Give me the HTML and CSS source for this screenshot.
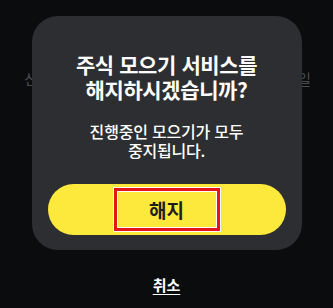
FILE: index.html
```html
<!DOCTYPE html>
<html lang="ko">
<head>
    <meta charset="UTF-8">
    <meta name="viewport" content="width=device-width, initial-scale=1.0">
    <title>주식 모으기 해지</title>
    <link rel="stylesheet" href="styles.css">
</head>
<body>
    <div class="screen">
        <!-- 뒤쪽 화면 -->
        <div class="behind-row">
            <span>신</span>
            <span>일</span>
        </div>

        <div class="overlay">
            <div class="dialog">
                <h1 class="dialog-title">주식 모으기 서비스를<br>해지하시겠습니까?</h1>
                <p class="dialog-text">진행중인 모으기가 모두<br>중지됩니다.</p>
                <button class="confirm-button"><span class="mark">해지</span></button>
            </div>
            <a class="cancel-link" href="#">취소</a>
        </div>
    </div>
</body>
</html>
```

FILE: styles.css
```css
:root {
    --bg-color: #0b0c0e;
    --dialog-color: #2c2e31;
    --yellow: #fde93b;
    --text-color: #ffffff;
}

* {
    margin: 0;
    padding: 0;
    box-sizing: border-box;
    font-family: "Noto Sans CJK KR", "Noto Sans", sans-serif;
}

body {
    background-color: var(--bg-color);
    color: var(--text-color);
    width: 333px;
    height: 308px;
    overflow: hidden;
}

.screen {
    position: relative;
    width: 100%;
    height: 100%;
}

.behind-row {
    display: flex;
    justify-content: space-between;
    padding: 68px 22px 0 24px;
    color: #4a4c50;
    font-size: 15px;
}

.overlay {
    position: absolute;
    top: 0;
    left: 0;
    width: 100%;
    height: 100%;
    display: flex;
    flex-direction: column;
    align-items: center;
    padding-top: 16px;
}

.dialog {
    width: 270px;
    background: var(--dialog-color);
    border-radius: 26px;
    padding: 36px 16px 15px;
    text-align: center;
}

.dialog-title {
    font-size: 21px;
    font-weight: 700;
    line-height: 25px;
    letter-spacing: -0.4px;
}

.dialog-text {
    margin-top: 20px;
    font-size: 16px;
    font-weight: 500;
    line-height: 19px;
    letter-spacing: -0.2px;
}

.confirm-button {
    margin-top: 24px;
    width: 100%;
    height: 51px;
    border: none;
    border-radius: 26px;
    background: var(--yellow);
    color: #1d1d1d;
    font-size: 19px;
    font-weight: 700;
    display: flex;
    justify-content: center;
    align-items: center;
}

.mark {
    display: flex;
    justify-content: center;
    align-items: center;
    width: 106px;
    height: 43px;
    border: 3px solid #e8141c;
    box-shadow: inset 0 0 0 1px #fff, 0 0 0 1px #fff;
}

.cancel-link {
    margin-top: 25px;
    color: var(--text-color);
    font-size: 15px;
    font-weight: 700;
    line-height: 20px;
    text-decoration: underline;
    text-underline-offset: 3px;
}
```
